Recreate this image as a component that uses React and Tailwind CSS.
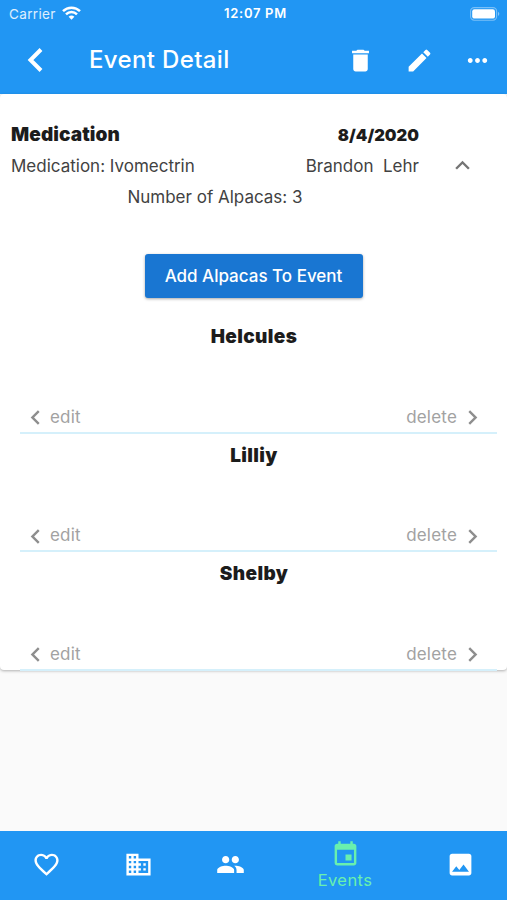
import {
    MdBusiness,
    MdChevronLeft,
    MdChevronRight,
    MdDelete,
    MdEdit,
    MdEvent,
    MdExpandLess,
    MdFavoriteBorder,
    MdImage,
    MdMoreHoriz,
    MdPeople,
} from 'react-icons/md';

const alpacas = ['Helcules', 'Lilliy', 'Shelby'];

const StatusBar = () => (
    <div className="flex h-[28px] items-center justify-between pl-[9px] pr-[7px] text-[13px]">
        <div className="flex w-[160px] items-center gap-[6px]">
            <span className="text-[13.5px] tracking-[0.35px] text-white/85">Carrier</span>
            <svg width="19" height="14" viewBox="0 0 19 14" fill="none" stroke="white" strokeWidth="2.5" className="-mt-[2px]">
                <path d="M1 5.1a12.2 12.2 0 0 1 17 0" />
                <path d="M4 8.3a7.9 7.9 0 0 1 11 0" />
                <path d="M9.5 13.7 6.6 10.8a4.2 4.2 0 0 1 5.8 0Z" fill="white" stroke="none" />
            </svg>
        </div>
        <span className="pl-[2px] font-semibold tracking-[0.7px]">12:07 PM</span>
        <div className="flex w-[160px] justify-end">
            <svg width="30" height="14" viewBox="0 0 30 14" fill="none" className="-mt-[1px]">
                <rect x="0.6" y="0.6" width="26" height="12.6" rx="3.6" stroke="white" strokeOpacity="0.4" strokeWidth="1.1" />
                <rect x="2.2" y="2.2" width="22.8" height="9.4" rx="2.2" fill="white" />
                <path d="M28 4.8c1.8.9 1.8 3.3 0 4.2Z" fill="white" fillOpacity="0.45" />
            </svg>
        </div>
    </div>
);

const AppBar = () => (
    <div className="flex h-[66px] items-center pb-[2px] pr-[15px]">
        <svg width="26" height="26" viewBox="0 0 26 26" fill="none" stroke="white" strokeWidth="4" className="ml-[21px]">
            <path d="M20 2.5 9.5 13 20 23.5" />
        </svg>
        <h1 className="ml-[42px] flex-1 text-[24px] font-medium tracking-[0.35px]">Event Detail</h1>
        <div className="flex gap-[29.5px]">
            <MdDelete size={29} />
            <MdEdit size={29} />
            <MdMoreHoriz size={29} />
        </div>
    </div>
);

const AlpacaRow = ({ name }) => (
    <li className="ml-[20px] mr-[10px] flex h-[118.5px] flex-col justify-between border-b-2 border-[#d5f0fb]">
        <h3 className="pt-[7px] pr-[9px] text-center text-[19px] leading-[30px] font-black tracking-[0.4px] text-[#1c1c1c]">{name}</h3>
        <div className="flex h-[28px] items-center justify-between pl-[1px] pr-[10px] text-[17px] tracking-[0.2px] text-[#a2a2a2]">
            <span className="flex items-center">
                <MdChevronLeft size={29} className="text-[#8e8e8e]" />
                edit
            </span>
            <span className="flex items-center gap-[1px]">
                delete
                <MdChevronRight size={29} className="text-[#8e8e8e]" />
            </span>
        </div>
    </li>
);

const NavItem = ({ icon: Icon, label }) => (
    <div className={label ? 'flex w-[138px] flex-col items-center text-[#69f0ae]' : 'flex w-[92px] flex-col items-center pb-[3px] pl-[1px]'}>
        <Icon size={29} />
        {label && <span className="text-[16.5px] leading-[22px] tracking-[0.4px]">{label}</span>}
    </div>
);

const App = () => {
    return (
        <div className="flex h-[900px] w-[507px] flex-col overflow-hidden bg-[#fafafa] font-['Inter',sans-serif]">
            <header className="shrink-0 bg-[#2196f3] text-white">
                <StatusBar />
                <AppBar />
            </header>

            <main className="flex-1">
                <div className="h-[576px] rounded-[4px] bg-white shadow-[0_1px_3px_rgba(0,0,0,0.3)]">
                    <div className="flex h-[134px] pt-[26px] text-[17px] text-[#424242]">
                        <div className="ml-[11px] w-[408px] shrink-0">
                            <div className="flex h-[31px] items-center justify-between font-black text-[#1c1c1c]">
                                <h2 className="text-[19px] tracking-[0.1px]">Medication</h2>
                                <span className="text-[16.5px]">8/4/2020</span>
                            </div>
                            <div className="flex h-[32px] items-center justify-between">
                                <span>Medication: Ivomectrin</span>
                                <span className="whitespace-pre">Brandon  Lehr</span>
                            </div>
                            <div className="flex h-[30px] items-center justify-center">Number of Alpacas: 3</div>
                        </div>
                        <MdExpandLess size={29} className="ml-[29px] mt-[31px] text-[#757575]" />
                    </div>

                    <div className="flex h-[96px] justify-center pt-[26px]">
                        <button
                            type="button"
                            className="h-[44px] w-[218px] rounded-[3px] bg-[#1976d2] pt-[1px] text-[17px] font-medium text-white shadow-[0_1px_3px_rgba(0,0,0,0.35)]"
                        >
                            Add Alpacas To Event
                        </button>
                    </div>

                    <ul className="-mt-[9px]">
                        {alpacas.map((name) => (
                            <AlpacaRow key={name} name={name} />
                        ))}
                    </ul>
                </div>
            </main>

            <nav className="flex h-[69px] shrink-0 items-center bg-[#2196f3] text-white">
                <NavItem icon={MdFavoriteBorder} />
                <NavItem icon={MdBusiness} />
                <NavItem icon={MdPeople} />
                <NavItem icon={MdEvent} label="Events" />
                <NavItem icon={MdImage} />
            </nav>
        </div>
    );
};

export default App;
